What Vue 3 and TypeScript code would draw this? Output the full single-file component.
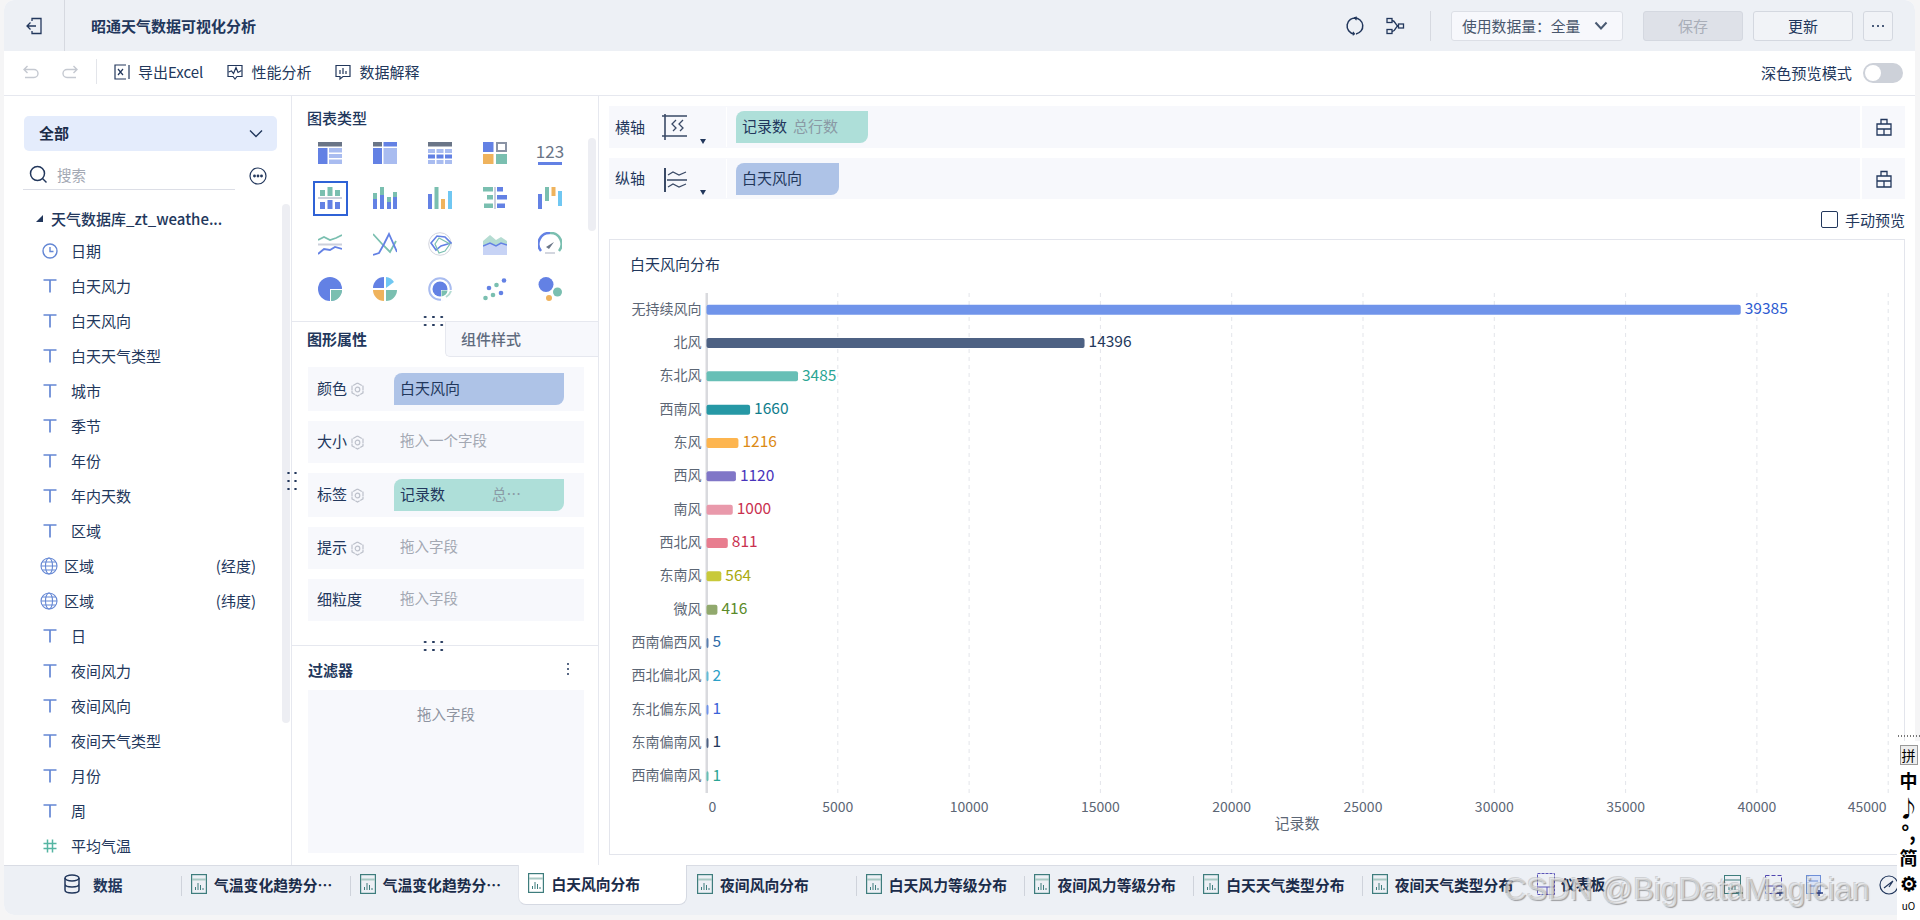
<script setup lang="ts">
interface Field { name: string; kind: 'time' | 'text' | 'geo' | 'num'; note?: string }
const fields: Field[] = [
  { name: '日期', kind: 'time' }, { name: '白天风力', kind: 'text' }, { name: '白天风向', kind: 'text' },
  { name: '白天天气类型', kind: 'text' }, { name: '城市', kind: 'text' }, { name: '季节', kind: 'text' },
  { name: '年份', kind: 'text' }, { name: '年内天数', kind: 'text' }, { name: '区域', kind: 'text' },
  { name: '区域', kind: 'geo', note: '(经度)' }, { name: '区域', kind: 'geo', note: '(纬度)' },
  { name: '日', kind: 'text' }, { name: '夜间风力', kind: 'text' }, { name: '夜间风向', kind: 'text' },
  { name: '夜间天气类型', kind: 'text' }, { name: '月份', kind: 'text' }, { name: '周', kind: 'text' },
  { name: '平均气温', kind: 'num' },
]
const rows = [
  { n: '无持续风向', v: 39385, c: '#7094ea', t: '#2d5bd1' },
  { n: '北风', v: 14396, c: '#4d6183', t: '#22375c' },
  { n: '东北风', v: 3485, c: '#67bfb6', t: '#2ba595' },
  { n: '西南风', v: 1660, c: '#2698a5', t: '#0f7d8c' },
  { n: '东风', v: 1216, c: '#fdb54f', t: '#dc8a14' },
  { n: '西风', v: 1120, c: '#8076c7', t: '#4834bb' },
  { n: '南风', v: 1000, c: '#e999ab', t: '#c9304f' },
  { n: '西北风', v: 811, c: '#e87d8f', t: '#c9304f' },
  { n: '东南风', v: 564, c: '#c8c93a', t: '#aaaa10' },
  { n: '微风', v: 416, c: '#91a96d', t: '#5a8a2a' },
  { n: '西南偏西风', v: 5, c: '#5a7fb0', t: '#2d6aa8' },
  { n: '西北偏北风', v: 2, c: '#62bcd8', t: '#2ba0c8' },
  { n: '东北偏东风', v: 1, c: '#7094ea', t: '#3a63d8' },
  { n: '东南偏南风', v: 1, c: '#4d6183', t: '#22375c' },
  { n: '西南偏南风', v: 1, c: '#67bfb6', t: '#2ba595' },
]
const X0 = 96.5
const PX = 1181.7 / 45000
const RH = 33.33
const ticks = [0, 5000, 10000, 15000, 20000, 25000, 30000, 35000, 40000, 45000]
const barW = (v: number) => Math.max(v * PX, 2)
const tabs = ['气温变化趋势分…', '气温变化趋势分…', '白天风向分布', '夜间风向分布', '白天风力等级分布', '夜间风力等级分布', '白天天气类型分布', '夜间天气类型分布']
const props = [
  { l: '颜色', gear: true, pill: '白天风向', cls: 'blue', h: 44 },
  { l: '大小', gear: true, ph: '拖入一个字段', h: 42 },
  { l: '标签', gear: true, pill: '记录数', sub: '总…', cls: 'green', h: 44 },
  { l: '提示', gear: true, ph: '拖入字段', h: 42 },
  { l: '细粒度', gear: false, ph: '拖入字段', h: 42 },
]
</script>

<template>
  <div class="page">
    <div class="frame">
      <header class="header">
        <div class="back">
          <svg width="20" height="20" viewBox="0 0 20 20" fill="none" stroke="#22375c" stroke-width="1.3"><path d="M7 5V2.500h9v15H7V15M2 10h9M5.500 6.500 2 10l3.500 3.500" /></svg>
        </div>
        <div class="title">昭通天气数据可视化分析</div>
        <svg class="h-ic" width="20" height="20" viewBox="0 0 20 20" fill="none" stroke="#22375c" stroke-width="1.500"><path d="M11.500 2.100A8 8 0 1 0 9 17.900M11 17.900A8 8 0 0 0 9.500 2" /><path d="m8 15.800 1.500 2-1.800 1.400M11.500 4.200 9.800 2.200 11.600.8" stroke-width="1.100" /></svg>
        <svg class="h-ic2" width="20" height="20" viewBox="0 0 20 20" fill="none" stroke="#22375c" stroke-width="1.300"><rect x="2" y="2.500" width="5" height="4" /><rect x="2" y="13.500" width="5" height="4" /><rect x="13.500" y="8" width="5" height="4" /><path d="M7 4.500c4 0 3 5.500 6.500 5.500M7 15.500c4 0 3-5.500 6.500-5.500" /></svg>
        <div class="h-sep"></div>
        <div class="data-sel">
          <span>使用数据量：全量</span>
          <svg width="14" height="10" viewBox="0 0 14 10" fill="none" stroke="#4a5a72" stroke-width="2"><path d="m1.500 1.500 5.500 6 5.500-6" /></svg>
        </div>
        <div class="btn disabled">保存</div>
        <div class="btn">更新</div>
        <div class="btn more"><svg width="14" height="4" viewBox="0 0 14 4" fill="#22375c"><circle cx="2" cy="2" r="1.100" /><circle cx="7" cy="2" r="1.100" /><circle cx="12" cy="2" r="1.100" /></svg></div>
      </header>

      <div class="toolbar">
        <svg class="undo" width="18" height="18" viewBox="0 0 18 18" fill="none" stroke="#c5c9d1" stroke-width="1.400"><path d="M5.500 3 2 6.500 5.500 10M2 6.500h10a4 4 0 0 1 0 8H3" /></svg>
        <svg class="redo" width="18" height="18" viewBox="0 0 18 18" fill="none" stroke="#c5c9d1" stroke-width="1.400"><path d="M12.500 3 16 6.500 12.500 10M16 6.500H6a4 4 0 0 0 0 8h9" /></svg>
        <div class="t-sep"></div>
        <div class="t-item i1">
          <svg width="18" height="18" viewBox="0 0 18 18" fill="none" stroke="#22375c" stroke-width="1.200"><path d="M13 2H2v14h11M16 2v14" /><path d="m5 6 5 6M10 6l-5 6" /></svg>
          <span>导出Excel</span>
        </div>
        <div class="t-item i2">
          <svg width="18" height="18" viewBox="0 0 18 18" fill="none" stroke="#22375c" stroke-width="1.200"><path d="M2 2.500h14v11H11l-2 2.500-2-2.500H2z" /><path d="m2.500 9 3-1 2 2.500L10 4.500l2 5 3.500-2" /></svg>
          <span>性能分析</span>
        </div>
        <div class="t-item i3">
          <svg width="18" height="18" viewBox="0 0 18 18" fill="none" stroke="#22375c" stroke-width="1.200"><path d="M2 2.500h14v11H9l-3 2.500v-2.500H2z" /><path d="M6 7v4M9 5v6M12 8v3" /></svg>
          <span>数据解释</span>
        </div>
        <div class="dark-label">深色预览模式</div>
        <div class="toggle"><i></i></div>
      </div>

      <div class="main">
        <aside class="left">
          <div class="scope">
            <b>全部</b>
            <svg width="14" height="9" viewBox="0 0 14 9" fill="none" stroke="#22375c" stroke-width="1.400"><path d="m1 1.500 6 6 6-6" /></svg>
          </div>
          <div class="search-row">
            <div class="search">
              <svg width="19" height="19" viewBox="0 0 19 19" fill="none" stroke="#22375c" stroke-width="1.500"><circle cx="8.500" cy="8.500" r="7" /><path d="m13.500 13.500 4 4" /></svg>
              <span>搜索</span>
            </div>
            <svg width="18" height="18" viewBox="0 0 18 18" fill="none" stroke="#22375c" stroke-width="1.200"><circle cx="9" cy="9" r="8" /><circle cx="5.500" cy="9" r=".8" fill="#22375c" /><circle cx="9" cy="9" r=".8" fill="#22375c" /><circle cx="12.500" cy="9" r=".8" fill="#22375c" /></svg>
          </div>
          <div class="db-row">
            <i class="tri"></i>
            <span class="db-name">天气数据库_zt_weathe...</span>
          </div>
          <div v-for="(f, i) in fields" :key="i" class="field" :class="f.kind">
            <svg v-if="f.kind === 'time'" width="16" height="16" viewBox="0 0 16 16" fill="none" stroke="#6487d4" stroke-width="1.400"><circle cx="8" cy="8" r="7" /><path d="M8 4v4.500h3.500" /></svg>
            <svg v-else-if="f.kind === 'text'" width="16" height="16" viewBox="0 0 16 16" fill="none" stroke="#6487d4" stroke-width="1.700"><path d="M1.500 2h13M8 2v12.500" /></svg>
            <svg v-else-if="f.kind === 'geo'" width="18" height="18" viewBox="0 0 18 18" fill="none" stroke="#6487d4" stroke-width="1.100"><circle cx="9" cy="9" r="8" /><ellipse cx="9" cy="9" rx="3.500" ry="8" /><path d="M1 9h16M2.200 5h13.600M2.200 13h13.600" /></svg>
            <svg v-else width="16" height="16" viewBox="0 0 16 16" fill="none" stroke="#55b5a2" stroke-width="1.500"><path d="M5.500 1.500v13M10.500 1.500v13M1.500 5.500h13M1.500 10.500h13" /></svg>
            <span class="f-name">{{ f.name }}</span>
            <span v-if="f.note" class="f-note">{{ f.note }}</span>
          </div>
          <div class="left-scroll"></div>
        </aside>

        <section class="mid">
          <div class="types">
            <div class="sec-title">图表类型</div>
            <div class="type-grid">
              <svg viewBox="0 0 24 22"><rect width="24" height="4.500" fill="#6a7587" /><rect y="6" width="9.500" height="16" fill="#6381e4" /><rect x="11" y="6" width="13" height="4.500" fill="#a9bcf0" /><rect x="11" y="12" width="13" height="4" fill="#a9bcf0" /><rect x="11" y="17.500" width="13" height="4.500" fill="#a9bcf0" /></svg>
              <svg viewBox="0 0 24 22"><rect width="9" height="4.500" fill="#6a7587" /><rect x="10.500" width="13.500" height="4.500" fill="#6381e4" /><rect y="6" width="9" height="16" fill="#6381e4" /><rect x="10.500" y="6" width="13.500" height="16" fill="#a9bcf0" /></svg>
              <svg viewBox="0 0 24 22"><rect width="24" height="4.500" fill="#6a7587" /><rect y="7" width="7" height="4" fill="#a9bcf0" /><rect x="8.500" y="7" width="7" height="4" fill="#a9bcf0" /><rect x="17" y="7" width="7" height="4" fill="#a9bcf0" /><rect y="12.500" width="7" height="4" fill="#6381e4" /><rect x="8.500" y="12.500" width="7" height="4" fill="#6381e4" /><rect x="17" y="12.500" width="7" height="4" fill="#6381e4" /><rect y="18" width="7" height="4" fill="#a9bcf0" /><rect x="8.500" y="18" width="7" height="4" fill="#a9bcf0" /><rect x="17" y="18" width="7" height="4" fill="#a9bcf0" /></svg>
              <svg viewBox="0 0 24 22"><rect width="10.500" height="10" fill="#6381e4" /><rect x="14" y="1" width="9" height="8" fill="none" stroke="#8a93a5" stroke-width="2" /><rect y="12" width="10.500" height="10" fill="#efb35d" /><rect x="13" y="12" width="11" height="10" fill="#7abfb0" /></svg>
              <div class="num-ic"><span>123</span><i></i></div>

              <div class="selected"><svg viewBox="0 0 24 22"><rect x="2" y="3" width="5" height="6" fill="#7abfb0" /><rect x="9.500" y="0" width="5" height="9" fill="#7abfb0" /><rect x="17" y="3" width="5" height="6" fill="#7abfb0" /><rect y="10" width="24" height="2" fill="#ccd0dc" /><rect x="2" y="15" width="5" height="7" fill="#6381e4" /><rect x="9.500" y="13" width="5" height="9" fill="#6381e4" /><rect x="17" y="15" width="5" height="7" fill="#6381e4" /></svg></div>
              <svg viewBox="0 0 24 22"><rect y="6" width="4" height="6" fill="#7abfb0" /><rect y="12" width="4" height="10" fill="#6381e4" /><rect x="7" width="4" height="8" fill="#7abfb0" /><rect x="7" y="8" width="4" height="14" fill="#6381e4" /><rect x="14" y="10" width="4" height="5" fill="#7abfb0" /><rect x="14" y="15" width="4" height="7" fill="#6381e4" /><rect x="20" y="5" width="4" height="5" fill="#7abfb0" /><rect x="20" y="10" width="4" height="12" fill="#6381e4" /></svg>
              <svg viewBox="0 0 24 22"><rect y="7" width="4" height="15" fill="#6381e4" /><rect x="6.500" width="4" height="22" fill="#7abfb0" /><rect x="13" y="12" width="4" height="10" fill="#efb35d" /><rect x="20" y="4" width="4" height="18" fill="#70c7f2" /></svg>
              <svg viewBox="0 0 24 22"><rect x="11" width="2" height="22" fill="#ccd0dc" /><rect width="10" height="4.500" fill="#7abfb0" /><rect x="14" width="6" height="4.500" fill="#6381e4" /><rect x="4" y="8" width="6" height="4.500" fill="#7abfb0" /><rect x="14" y="8" width="10" height="4.500" fill="#6381e4" /><rect x="1" y="16.500" width="9" height="4.500" fill="#7abfb0" /><rect x="14" y="16.500" width="8" height="4.500" fill="#6381e4" /></svg>
              <svg viewBox="0 0 24 22"><rect y="7" width="4" height="15" fill="#6381e4" /><rect x="7" y="0" width="4" height="14" fill="#7abfb0" /><rect x="13.500" y="0" width="4" height="9" fill="#efb35d" /><rect x="20" y="4" width="4" height="15" fill="#70c7f2" /></svg>

              <svg viewBox="0 0 24 22" fill="none" stroke-width="1.800"><path d="m0 7 6-3 6 3 6-2 6-3" stroke="#7abfb0" /><rect y="10.500" width="24" height="2" fill="#ccd0dc" stroke="none" /><path d="m0 21 6-5 6 1 5-3 7 2" stroke="#6381e4" /></svg>
              <svg viewBox="0 0 24 22" fill="none" stroke-width="1.800"><path d="m0 1 10 11 7 7 6-11" stroke="#7abfb0" /><path d="m0 22 6-2 5-9 5-10 8 18" stroke="#6381e4" /></svg>
              <svg viewBox="0 0 24 24" fill="none"><circle cx="12" cy="12" r="11.300" stroke="#d3d6df" stroke-width="1" /><path d="m3 11 6-7 8 1 6 6-10 3-5 4z" stroke="#6381e4" stroke-width="1.600" /><path d="m11 6 11 6-5 7-6 2-4-9z" stroke="#7abfb0" stroke-width="1.200" /></svg>
              <svg viewBox="0 0 24 22"><path d="M0 8 7 2l6 5 5-3 6 4v14H0z" fill="#b5dcd2" /><path d="m0 13 7-3 6 3 5-3 6 2v10H0z" fill="#c7d3f5" /><path d="m0 13 7-3 6 3 5-3 6 2" fill="none" stroke="#6381e4" stroke-width="1.500" /></svg>
              <svg viewBox="0 0 24 24" fill="none" stroke-width="2.500"><path d="M3 19A11 11 0 0 1 12 1" stroke="#6381e4" /><path d="M12 1a11 11 0 0 1 9 18" stroke="#7abfb0" /><path d="M8 15l8-5-5 7" fill="#6a7587" stroke="none" /><rect x="7" y="20" width="10" height="2" fill="#d3d6df" stroke="none" /></svg>

              <svg viewBox="0 0 24 24"><path d="M12 0a12 12 0 0 1 0 24A12 12 0 0 1 0 12 12 12 0 0 1 12 0z" fill="#6381e4" /><path d="M13 13h11a11 11 0 0 1-11 11z" fill="#7abfb0" /><path d="M12 12h12v1H13v11h-1z" fill="#fff" /></svg>
              <svg viewBox="0 0 24 24"><path d="M11 11H0A11 11 0 0 1 11 0z" fill="#6381e4" /><path d="M13 0a11 11 0 0 1 8 5l-8 6z" fill="#70c7f2" /><path d="M11 13H0a11 11 0 0 0 11 11z" fill="#efb35d" /><path d="M13 13h11a11 11 0 0 1-11 11z" fill="#7abfb0" /></svg>
              <svg viewBox="0 0 24 24" fill="none"><circle cx="12" cy="12" r="10.800" stroke="#a9bcf0" stroke-width="2" /><circle cx="12" cy="12" r="7.500" fill="#6381e4" /><path d="M13 13h11a11 11 0 0 1-11 11z" fill="#fff" /><path d="M13.500 13.500h6a6.500 6.500 0 0 1-6 6z" fill="#7abfb0" /><path d="M18 20a11 11 0 0 0 5-6" stroke="#b5dcd2" stroke-width="2" /></svg>
              <svg viewBox="0 0 24 24"><circle cx="6" cy="11" r="2.300" fill="#6381e4" /><circle cx="13.500" cy="8" r="2.300" fill="#7abfb0" /><circle cx="21" cy="3.500" r="2.300" fill="#6381e4" /><circle cx="2.500" cy="21" r="2.300" fill="#7abfb0" /><circle cx="10" cy="18" r="2.300" fill="#7abfb0" /><circle cx="18" cy="16" r="2.300" fill="#6381e4" /></svg>
              <svg viewBox="0 0 24 24"><circle cx="8" cy="7.500" r="7.500" fill="#6381e4" /><circle cx="19.500" cy="15" r="4.500" fill="#7abfb0" /><circle cx="11" cy="21" r="3" fill="#efb35d" /></svg>
            </div>
            <div class="mid-scroll"></div>
          </div>

          <div class="prop-tabs">
            <div class="p-tab on">图形属性</div>
            <div class="p-tab">组件样式</div>
          </div>
          <div class="props">
            <div v-for="p in props" :key="p.l" class="prop" :style="{ height: p.h + 'px' }">
              <span class="p-label">{{ p.l }}</span>
              <svg v-if="p.gear" class="gear" width="15" height="15" viewBox="0 0 15 15" fill="none" stroke="#bdc1cb" stroke-width="1.200"><path d="M7.500 1 13 4.200v6.600L7.500 14 2 10.800V4.200z" stroke-dasharray="5 .6" /><circle cx="7.500" cy="7.500" r="2.300" /></svg>
              <div v-if="p.pill" class="pill" :class="p.cls"><span>{{ p.pill }}</span><em v-if="p.sub">{{ p.sub }}</em></div>
              <span v-else class="ph">{{ p.ph }}</span>
            </div>
          </div>
          <div class="filter">
            <div class="f-head"><span>过滤器</span><i class="vdots"></i></div>
            <div class="f-box">拖入字段</div>
          </div>
          <div class="dots d1"></div>
          <div class="dots d2"></div>
          <div class="dots d3"></div>
        </section>

        <section class="right">
          <div class="axis">
            <span class="a-label">横轴</span>
            <svg class="a-ic" width="28" height="28" viewBox="0 0 28 28" fill="none" stroke="#3a4a66" stroke-width="1.300"><path d="M3 0v26" stroke-width="1.600" /><path d="M0 2h25M0 22h25" /><path d="m14 6-4 4 4 4-3 3M21 6l-4 4 4 4-3 3" /></svg>
            <i class="caret"></i>
            <div class="a-sep"></div>
            <div class="a-pill green w1"><span>记录数</span><em>总行数</em></div>
            <div class="a-end"><svg width="16" height="18" viewBox="0 0 16 18" fill="none" stroke="#22375c" stroke-width="1.300"><path d="M1 6h14v11H1zM5 6V1.500h6V6M1 11h14M8 11v6" /></svg></div>
          </div>
          <div class="axis a2">
            <span class="a-label">纵轴</span>
            <svg class="a-ic" width="28" height="28" viewBox="0 0 28 28" fill="none" stroke="#3a4a66" stroke-width="1.300"><path d="M3 2v24" stroke-width="2" /><path d="m6 9 5-3 6 3 7-3M5 14h20M6 21l5-3 6 3 7-3" /></svg>
            <i class="caret"></i>
            <div class="a-sep"></div>
            <div class="a-pill blue w2"><span>白天风向</span></div>
            <div class="a-end"><svg width="16" height="18" viewBox="0 0 16 18" fill="none" stroke="#22375c" stroke-width="1.300"><path d="M1 6h14v11H1zM5 6V1.500h6V6M1 11h14M8 11v6" /></svg></div>
          </div>
          <div class="manual"><i></i><span>手动预览</span></div>
          <div class="card">
            <div class="c-title">白天风向分布</div>
            <svg class="chart" width="1286" height="560" viewBox="0 0 1286 560">
              <line v-for="t in ticks.slice(1)" :key="t" :x1="X0 + t * PX" :x2="X0 + t * PX" y1="9" y2="509" stroke="#e3e5ea" stroke-dasharray="4 4" />
              <rect :x="X0 - 1" y="9" width="2.500" height="500" fill="#d9dade" />
              <g v-for="(r, i) in rows" :key="r.n + i">
                <text :x="X0 - 5" :y="9 + RH * i + RH / 2 + 4" text-anchor="end" class="cat">{{ r.n }}</text>
                <rect :x="X0" :y="9 + RH * i + RH / 2 - 5" :width="barW(r.v)" height="10" rx="2" :fill="r.c" />
                <text :x="X0 + barW(r.v) + 4" :y="9 + RH * i + RH / 2 + 4.500" class="val" :fill="r.t">{{ r.v }}</text>
              </g>
              <text v-for="(t, i) in ticks" :key="'t' + t" :x="i === 9 ? X0 + t * PX - 21 : X0 + t * PX + (i === 0 ? 6 : 0)" y="528" text-anchor="middle" class="tick">{{ t }}</text>
              <text x="687" y="545" text-anchor="middle" class="axis-name">记录数</text>
            </svg>
          </div>
        </section>
      </div>

      <footer class="tabs">
        <div class="t-data">
          <svg width="16" height="20" viewBox="0 0 16 20" fill="none" stroke="#22375c" stroke-width="1.500"><ellipse cx="8" cy="4" rx="7" ry="3" /><path d="M1 4v12c0 4 14 4 14 0V4M1 10c0 4 14 4 14 0" /></svg>
          <b>数据</b>
        </div>
        <div v-for="(t, i) in tabs" :key="i" class="tab" :class="{ active: i === 2, nosep: i === 2 || i === 3 }">
          <svg width="16" height="20" viewBox="0 0 16 20" fill="none"><rect x=".6" y=".6" width="14.800" height="18.800" stroke="#3e7d7d" stroke-width="1.200" /><rect x="1" y="4.500" width="14" height="2" fill="#a9c9c4" /><path d="M4.500 16v-3M7 16V9M9.500 16v-5M12 16v-2" stroke="#3e7d7d" /></svg>
          <span>{{ t }}</span>
        </div>
        <div class="dash">
          <svg width="18" height="22" viewBox="0 0 18 22" fill="none" stroke="#5b55b8" stroke-width="1"><rect x=".5" y=".5" width="17" height="21" stroke-dasharray="3 1" /><path d="M.5 14h17M10 14v8" /></svg>
          <b>仪表板</b>
        </div>
        <div class="adds">
          <svg class="add1" width="20" height="22" viewBox="0 0 20 22" fill="none" stroke="#3e7d7d"><rect x=".5" y=".5" width="16" height="18" /><path d="M1 5h16M5 15v-3M8 15V9M11 15v-4" /><path d="M15 15v6M12 18h7" stroke-width="1.400" /></svg>
          <svg class="add2" width="20" height="22" viewBox="0 0 20 22" fill="none" stroke="#4f46b0"><rect x=".5" y=".5" width="16" height="18" stroke-dasharray="4 2" /><path d="M1 11h16M9 11v8" /><path d="M15 15v6M12 18h7" stroke="#2d3f80" stroke-width="1.400" /></svg>
          <svg class="add3" width="20" height="22" viewBox="0 0 20 22" fill="none" stroke="#6e8fd8"><rect x=".5" y=".5" width="14" height="18" fill="#dbe4f7" /><path d="M3 6h9M3 11h9" /><path d="M13 15v6M10 18h7" stroke="#2d3f80" stroke-width="1.400" /></svg>
          <svg class="add4" width="20" height="20" viewBox="0 0 20 20" fill="none" stroke="#22375c" stroke-width="1.200"><circle cx="10" cy="10" r="9" /><path d="M5 13 14 6M10 12l4-6" /></svg>
        </div>
      </footer>
    </div>

    <div class="side-dots"></div>
    <div class="ime">
      <span class="ime-box">拼</span><span>中</span><span class="ime-n">♪</span><span class="ime-p">°,</span><span>简</span><span class="ime-g">⚙</span><small>uO</small>
    </div>
    <div class="watermark">CSDN @BigDataMagician</div>
  </div>
</template>

<style>
html, body { margin: 0; padding: 0; overflow: hidden; }
</style>

<style scoped>
.page { position: relative; width: 1920px; height: 920px; background: #f5f5f6; overflow: hidden; font-family: "Noto Sans CJK SC", "Noto Sans", sans-serif; color: #22375c; font-size: 15px; }
.frame { position: absolute; inset: 0 5px 5px 4px; display: flex; flex-direction: column; background: #fff; border-radius: 10px; overflow: hidden; }
svg { display: block; flex: none; }

.header { height: 51px; flex: none; display: flex; align-items: center; background: #edf0f5; }
.back { width: 61px; height: 51px; box-sizing: border-box; border-right: 1px solid #d6d9e0; display: flex; align-items: center; padding-left: 21px; }
.title { margin-left: 26px; font-size: 15px; font-weight: 700; flex: 1; }
.h-ic { margin-right: 20px; }
.h-ic2 { margin-right: 25px; }
.h-sep { width: 1px; height: 30px; background: #d6d9e0; margin-right: 20px; }
.data-sel { width: 172px; height: 30px; box-sizing: border-box; background: #f7f8fc; border: 1px solid #dcdfe6; border-radius: 3px; display: flex; align-items: center; justify-content: space-between; padding: 0 14px 0 10px; margin-right: 20px; color: #49576d; font-size: 14.800px; }
.btn { width: 100px; height: 30px; box-sizing: border-box; border: 1px solid #d4d8e0; border-radius: 3px; background: #f1f3f7; display: flex; align-items: center; justify-content: center; margin-right: 10px; }
.btn.disabled { background: #dee1e8; color: #a9aeb8; }
.btn.more { width: 30px; margin-right: 22px; }

.toolbar { height: 41px; padding-bottom: 3px; flex: none; box-sizing: content-box; border-bottom: 1px solid #e6e8ef; display: flex; align-items: center; }
.undo { margin-left: 18px; }
.redo { margin-left: 21px; }
.t-sep { width: 1px; height: 25px; background: #e3e5ea; margin-left: 17px; }
.t-item { display: flex; align-items: center; gap: 7px; }
.i1 { margin-left: 16px; }
.i2 { margin-left: 23px; }
.i3 { margin-left: 23px; }
.dark-label { margin-left: auto; color: #22375c; font-size: 15.200px; }
.toggle { width: 40px; height: 20px; border-radius: 10px; background: #cdd1d9; margin: 3px 12px 0 11px; position: relative; }
.toggle i { position: absolute; left: 2px; top: 2px; width: 16px; height: 16px; border-radius: 50%; background: #fff; }

.main { flex: 1; min-height: 0; display: flex; }
.left { width: 288px; flex: none; box-sizing: border-box; border-right: 1px solid #e6e8ef; position: relative; padding: 20px 0 0 20px; overflow: hidden; }
.scope { width: 253px; height: 35px; box-sizing: border-box; background: #e4ecfc; border-radius: 5px; display: flex; align-items: center; justify-content: space-between; padding: 0 14px 0 15px; }
.scope b { font-weight: 700; color: #1b2c4a; padding-bottom: 3px; }
.search-row { display: flex; align-items: center; margin-top: 10px; margin-left: -1px; }
.search { width: 212px; height: 29px; box-sizing: border-box; border-bottom: 1px solid #dcdee6; display: flex; align-items: center; gap: 9px; padding: 0 0 2px 6px; color: #a3a8b3; font-size: 14.500px; }
.search-row > svg { margin-left: 14px; }
.db-row { display: flex; align-items: center; height: 29px; margin-top: 14px; padding-left: 12px; }
.tri { width: 0; height: 0; border-left: 7px solid transparent; border-bottom: 7px solid #22375c; margin-right: 8px; flex: none; }
.db-name { white-space: nowrap; font-weight: 500; }
.field { display: flex; align-items: center; height: 35px; padding-left: 18px; width: 232px; box-sizing: border-box; }
.field > svg { margin-right: 13px; }
.field.geo { padding-left: 16px; }
.field.geo > svg { margin-right: 6px; }
.f-note { margin-left: auto; margin-right: 0; }
.f-name { white-space: nowrap; }
.left-scroll { position: absolute; left: 278px; top: 108px; width: 8px; height: 519px; background: #edeef3; border-radius: 4px; }

.mid { width: 307px; flex: none; box-sizing: border-box; border-right: 1px solid #e6e8ef; position: relative; display: flex; flex-direction: column; }
.types { height: 225px; flex: none; position: relative; padding: 12px 0 0 15px; box-sizing: border-box; }
.sec-title { font-weight: 500; line-height: 20px; }
.type-grid { display: grid; grid-template-columns: repeat(5, 24px); grid-auto-rows: 24px; column-gap: 31px; row-gap: 21.300px; margin: 13px 0 0 11px; }
.type-grid svg { width: 24px; height: 24px; }
.selected { position: relative; width: 24px; height: 24px; }
.selected::after { content: ""; position: absolute; left: -5px; top: -5px; width: 35px; height: 35px; box-sizing: border-box; border: 2px solid #2f62d6; }
.num-ic { display: flex; flex-direction: column; align-items: center; color: #6a7587; font-size: 17px; line-height: 20px; }
.num-ic i { display: block; width: 24px; height: 3px; background: #6381e4; margin-top: 1px; }
.mid-scroll { position: absolute; left: 296px; top: 42px; width: 8px; height: 93px; border-radius: 4px; background: #edeef3; }
.prop-tabs { display: flex; height: 36px; flex: none; border-top: 1px solid #e6e8ef; box-sizing: border-box; }
.p-tab { display: flex; align-items: center; font-weight: 500; padding-bottom: 2px; box-sizing: border-box; }
.p-tab.on { width: 153px; padding-left: 15px; font-weight: 700; }
.p-tab:not(.on) { flex: 1; background: #f7f8fc; border-left: 1px solid #e6e8ef; border-bottom: 1px solid #e6e8ef; border-bottom-left-radius: 5px; padding-left: 15px; color: #5f6b7e; }
.props { padding: 10px 14px 0 16px; display: flex; flex-direction: column; gap: 10px; flex: none; height: 288px; box-sizing: border-box; }
.prop { background: #f7f8fc; display: flex; align-items: center; padding-left: 9px; position: relative; flex: none; }
.p-label { padding-bottom: 3px; }
.gear { margin-left: 3px; }
.pill { position: absolute; left: 86px; top: 6px; width: 170px; height: 32px; display: flex; align-items: center; padding: 0 0 3px 6px; box-sizing: border-box; border-top-left-radius: 8px; border-bottom-right-radius: 8px; }
.blue { background: #aec3e7; }
.green { background: #aedfd9; }
.pill em { font-style: normal; color: #8a9aa5; margin-left: 47px; font-size: 14.500px; }
.ph { position: absolute; left: 92px; top: 8px; color: #a3a8b3; font-size: 14.500px; line-height: 22px; }
.filter { border-top: 1px solid #e6e8ef; flex: 1; padding: 0 14px 0 16px; box-sizing: border-box; display: flex; flex-direction: column; }
.f-head { height: 44px; padding-top: 2px; box-sizing: border-box; flex: none; display: flex; align-items: center; justify-content: space-between; font-weight: 700; }
.vdots { width: 2.500px; height: 2.500px; border-radius: 50%; background: #22375c; box-shadow: 0 -5px 0 #22375c, 0 5px 0 #22375c; margin-right: 15px; }
.f-box { flex: none; height: 163px; background: #f7f8fc; text-align: center; color: #8d93a0; font-size: 14.500px; padding-top: 13px; box-sizing: border-box; }
.dots { position: absolute; width: 24px; height: 16px; background-image: radial-gradient(circle, #22375c 1px, transparent 1.300px); background-size: 8.300px 8px; }
.d1 { left: 129px; top: 217px; }
.d2 { left: 129px; top: 542px; }
.d3 { left: -7px; top: 373px; width: 14px; height: 24px; background-size: 7px 8px; }

.right { flex: 1; min-width: 0; padding: 10px 10px 0 10px; display: flex; flex-direction: column; }
.axis { height: 42px; flex: none; background: #f7f8fc; display: flex; align-items: center; padding-left: 6px; position: relative; }
.a2 { margin-top: 10px; height: 41px; }
.a-label { width: 47px; padding-bottom: 2px; }
.a-ic { margin-top: 2px; }
.caret { position: absolute; left: 91px; bottom: 4px; width: 0; height: 0; border: 3.500px solid transparent; border-top: 5px solid #22375c; border-bottom: 0; }
.a-sep { position: absolute; left: 117px; top: 1px; bottom: 1px; width: 1px; background: #fff; }
.a-pill { position: absolute; left: 127px; top: 5px; height: 32px; display: flex; align-items: center; gap: 6px; padding: 0 0 3px 6px; box-sizing: border-box; border-top-left-radius: 8px; border-bottom-right-radius: 8px; }
.a-pill em { font-style: normal; color: #8a9aa5; }
.w1 { width: 132px; }
.w2 { width: 103px; }
.a-end { margin-left: auto; width: 45px; align-self: stretch; border-left: 2px solid #fff; display: flex; align-items: center; justify-content: center; box-sizing: border-box; }
.manual { height: 40px; flex: none; display: flex; align-items: center; justify-content: flex-end; gap: 7px; }
.manual i { width: 17px; height: 17px; box-sizing: border-box; border: 1px solid #22375c; border-radius: 2px; }
.card { height: 616px; flex: none; box-sizing: border-box; border: 1px solid #e3e5ec; position: relative; }
.c-title { height: 44px; padding: 14px 0 0 20px; box-sizing: border-box; line-height: 20px; }
.chart { overflow: visible; }
.cat { font-size: 14px; fill: #5c6675; font-family: "Noto Sans CJK SC", sans-serif; }
.val { font-size: 15.500px; font-family: "Noto Sans CJK SC", sans-serif; }
.tick { font-size: 14px; fill: #5c6675; font-family: "Noto Sans CJK SC", sans-serif; }
.axis-name { font-size: 15px; fill: #5c6675; font-family: "Noto Sans CJK SC", sans-serif; }

.tabs { height: 50px; flex: none; background: #edf0f5; border-top: 1px solid #d9dce4; box-sizing: border-box; display: flex; align-items: flex-start; position: relative; font-size: 14.800px; }
.t-data { width: 177px; flex: none; height: 39px; display: flex; align-items: center; padding: 0 0 3px 60px; gap: 13px; box-sizing: border-box; }
.t-data b { font-weight: 700; }
.tab { width: 168.700px; flex: none; height: 39px; box-sizing: border-box; display: flex; align-items: center; gap: 7px; padding: 0 0 3px 10px; position: relative; font-weight: 700; white-space: nowrap; color: #1b2c4a; }
.tab::before { content: ""; position: absolute; left: 0; top: 10px; height: 20px; width: 1px; background: #cfd3db; }
.tab.nosep::before { display: none; }
.tab.active { background: #fff; border-radius: 0 0 8px 8px; border-bottom: 1px solid #d5d9e2; border-left: 1px solid #e0e3ea; border-right: 1px solid #d5d9e2; margin-top: -1px; height: 40px; padding-left: 9px; }
.dash { position: absolute; left: 1533px; top: 5px; display: flex; align-items: center; gap: 6px; height: 25px; }
.dash b { font-weight: 700; color: #1b2c4a; }
.adds svg { position: absolute; top: 9px; }
.add1 { left: 1720px; }
.add2 { left: 1761px; }
.add3 { left: 1802px; }
.add4 { left: 1875px; }

.ime { position: absolute; left: 1897px; top: 741px; width: 23px; height: 179px; background: #fff; display: flex; flex-direction: column; align-items: center; font-family: "Noto Sans CJK SC", sans-serif; font-size: 18px; line-height: 25.500px; color: #000; font-weight: 700; }
.side-dots { position: absolute; left: 1897px; top: 735px; width: 23px; height: 2px; background-image: radial-gradient(circle, #777 .7px, transparent .8px); background-size: 3px 2px; }
.ime-box { width: 18px; height: 20px; line-height: 18px; margin: 4px 0 3px; border: 1px solid #999; box-sizing: border-box; font-size: 14px; text-align: center; background: #eee; font-weight: 400; }
.ime-n { font-size: 22px; }
.ime-p { font-size: 20px; }
.ime-g { font-size: 20px; }
.ime small { font-size: 10px; line-height: 14px; font-weight: 400; margin-top: 3px; }
.watermark { position: absolute; left: 1504px; top: 873px; font-family: "Liberation Sans", sans-serif; font-size: 31.300px; line-height: 34px; white-space: nowrap; color: rgba(255, 255, 255, .55); text-shadow: 1px 1px 1px rgba(90, 90, 90, .55), -1px -1px 0 rgba(150, 150, 150, .35); }
</style>
